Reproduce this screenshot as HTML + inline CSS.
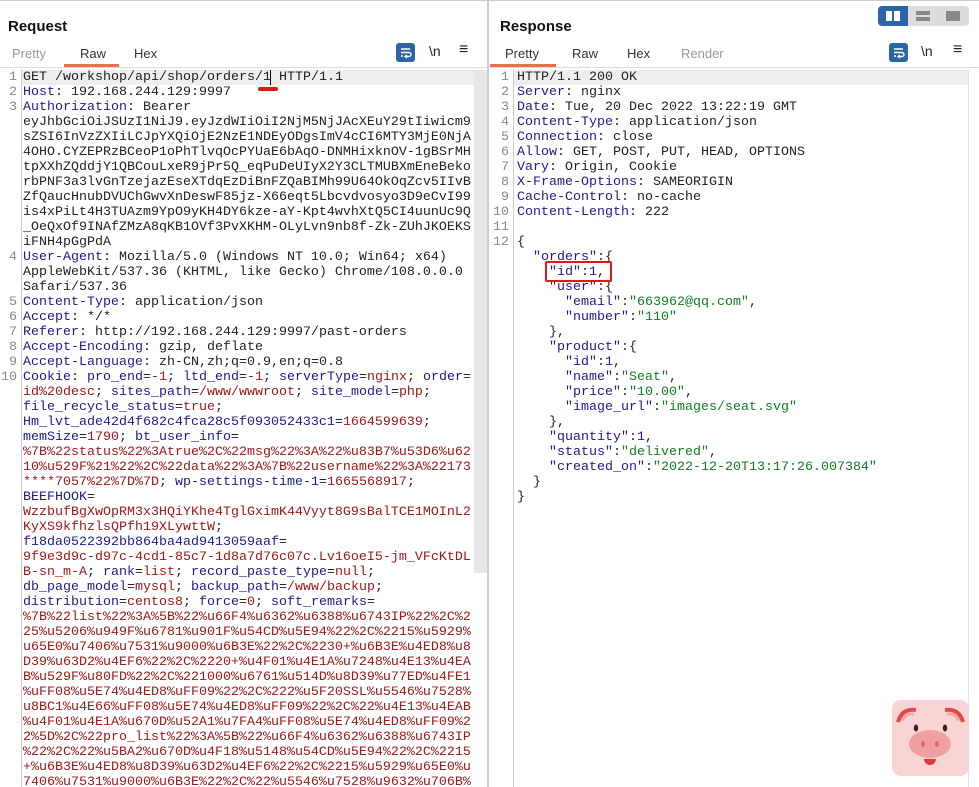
<!DOCTYPE html>
<html><head><meta charset="utf-8"><style>
*{margin:0;padding:0;box-sizing:border-box}
body{width:979px;height:787px;overflow:hidden;background:#fff;font-family:"Liberation Sans",sans-serif;position:relative}
.top{position:absolute;left:0;top:0;width:979px;height:1px;background:#ccc}
.h{position:absolute;font-weight:bold;font-size:15px;color:#111;top:18px}
.tab{position:absolute;top:46px;font-size:13px;color:#333}
.tab.g{color:#999}
.ul{position:absolute;height:3px;background:#e8704a;top:64px}
.bl{position:absolute;height:1px;background:#ddd;top:67px}
.ed{position:absolute;top:70px;bottom:0;overflow:hidden;font-family:"Liberation Mono",monospace;font-size:13.33px;line-height:15px;white-space:pre;color:#222}
.ln{position:absolute;top:70px;font-family:"Liberation Mono",monospace;font-size:13.33px;line-height:15px;color:#888;text-align:right;white-space:pre}
.k{color:#1c1c8f}.v{color:#a01818}.s{color:#0f7f1f}.n{color:#1c1c8f}
.ic{position:absolute;top:43px;font-size:14px;color:#222}
.wrap{position:absolute;top:43px;width:19px;height:19px;background:#2c64a8;border-radius:3px}
</style></head><body>
<div class="top"></div>
<!-- LEFT -->
<div class="h" style="left:8px">Request</div>
<div class="tab g" style="left:12px">Pretty</div>
<div class="tab" style="left:80px">Raw</div>
<div class="tab" style="left:134px">Hex</div>
<div class="ul" style="left:64px;width:55px"></div>
<div class="bl" style="left:0;width:487px"></div>
<div class="wrap" style="left:396px"><svg width="19" height="19"><path d="M5 6h9M5 9.5h8a2 2 0 0 1 0 4h-3M11 12l-2 1.5 2 1.5M5 13h2" stroke="#fff" stroke-width="1.4" fill="none"/></svg></div>
<div class="ic" style="left:429px">\n</div>
<div class="ic" style="left:459px;font-size:16px;top:41px">≡</div>
<div style="position:absolute;left:21px;top:70px;width:454px;height:15px;background:#eee"></div>
<div style="position:absolute;left:21px;top:70px;width:1px;bottom:0;background:#ccc"></div>
<div style="position:absolute;left:474px;top:70px;width:13px;height:503px;background:#e6e6e6"></div>
<div style="position:absolute;left:487px;top:0;width:2px;bottom:0;background:#ccc"></div>
<div class="ln" style="left:0;width:17px">1
2
3









4


5
6
7
8
9
10</div>
<div class="ed" style="left:23px;width:451px">GET /workshop/api/shop/orders/1<span style="border-left:1.5px solid #000;margin-left:-1px"></span> HTTP/1.1
<span class="k">Host</span>: 192.168.244.129:9997
<span class="k">Authorization</span>: Bearer
eyJhbGciOiJSUzI1NiJ9.eyJzdWIiOiI2NjM5NjJAcXEuY29tIiwicm9
sZSI6InVzZXIiLCJpYXQiOjE2NzE1NDEyODgsImV4cCI6MTY3MjE0NjA
4OHO.CYZEPRzBCeoP1oPhTlvqOcPYUaE6bAqO-DNMHixknOV-1gBSrMH
tpXXhZQddjY1QBCouLxeR9jPr5Q_eqPuDeUIyX2Y3CLTMUBXmEneBeko
rbPNF3a3lvGnTzejazEseXTdqEzDiBnFZQaBIMh99U64OkOqZcv5IIvB
ZfQaucHnubDVUChGwvXnDeswF85jz-X66eqt5Lbcvdvosyo3D9eCvI99
is4xPiLt4H3TUAzm9YpO9yKH4DY6kze-aY-Kpt4wvhXtQ5CI4uunUc9Q
_OeQxOf9INAfZMzA8qKB1OVf3PvXKHM-OLyLvn9nb8f-Zk-ZUhJKOEKS
iFNH4pGgPdA
<span class="k">User-Agent</span>: Mozilla/5.0 (Windows NT 10.0; Win64; x64)
AppleWebKit/537.36 (KHTML, like Gecko) Chrome/108.0.0.0
Safari/537.36
<span class="k">Content-Type</span>: application/json
<span class="k">Accept</span>: */*
<span class="k">Referer</span>: http://192.168.244.129:9997/past-orders
<span class="k">Accept-Encoding</span>: gzip, deflate
<span class="k">Accept-Language</span>: zh-CN,zh;q=0.9,en;q=0.8
<span class="k">Cookie</span>: <span class="k">pro_end</span>=<span class="v">-1</span>; <span class="k">ltd_end</span>=<span class="v">-1</span>; <span class="k">serverType</span>=<span class="v">nginx</span>; <span class="k">order</span>=
<span class="v">id%20desc</span>; <span class="k">sites_path</span>=<span class="v">/www/wwwroot</span>; <span class="k">site_model</span>=<span class="v">php</span>;
<span class="k">file_recycle_status</span>=<span class="v">true</span>;
<span class="k">Hm_lvt_ade42d4f682c4fca28c5f093052433c1</span>=<span class="v">1664599639</span>;
<span class="k">memSize</span>=<span class="v">1790</span>; <span class="k">bt_user_info</span>=
<span class="v">%7B%22status%22%3Atrue%2C%22msg%22%3A%22%u83B7%u53D6%u62
10%u529F%21%22%2C%22data%22%3A%7B%22username%22%3A%22173
****7057%22%7D%7D</span>; <span class="k">wp-settings-time-1</span>=<span class="v">1665568917</span>;
<span class="k">BEEFHOOK</span>=
<span class="v">WzzbufBgXwOpRM3x3HQiYKhe4TglGximK44Vyyt8G9sBalTCE1MOInL2
KyXS9kfhzlsQPfh19XLywttW</span>;
<span class="k">f18da0522392bb864ba4ad9413059aaf</span>=
<span class="v">9f9e3d9c-d97c-4cd1-85c7-1d8a7d76c07c.Lv16oeI5-jm_VFcKtDL
B-sn_m-A</span>; <span class="k">rank</span>=<span class="v">list</span>; <span class="k">record_paste_type</span>=<span class="v">null</span>;
<span class="k">db_page_model</span>=<span class="v">mysql</span>; <span class="k">backup_path</span>=<span class="v">/www/backup</span>;
<span class="k">distribution</span>=<span class="v">centos8</span>; <span class="k">force</span>=<span class="v">0</span>; <span class="k">soft_remarks</span>=
<span class="v">%7B%22list%22%3A%5B%22%u66F4%u6362%u6388%u6743IP%22%2C%2
25%u5206%u949F%u6781%u901F%u54CD%u5E94%22%2C%2215%u5929%
u65E0%u7406%u7531%u9000%u6B3E%22%2C%2230+%u6B3E%u4ED8%u8
D39%u63D2%u4EF6%22%2C%2220+%u4F01%u4E1A%u7248%u4E13%u4EA
B%u529F%u80FD%22%2C%221000%u6761%u514D%u8D39%u77ED%u4FE1
%uFF08%u5E74%u4ED8%uFF09%22%2C%222%u5F20SSL%u5546%u7528%
u8BC1%u4E66%uFF08%u5E74%u4ED8%uFF09%22%2C%22%u4E13%u4EAB
%u4F01%u4E1A%u670D%u52A1%u7FA4%uFF08%u5E74%u4ED8%uFF09%2
2%5D%2C%22pro_list%22%3A%5B%22%u66F4%u6362%u6388%u6743IP
%22%2C%22%u5BA2%u670D%u4F18%u5148%u54CD%u5E94%22%2C%2215
+%u6B3E%u4ED8%u8D39%u63D2%u4EF6%22%2C%2215%u5929%u65E0%u
7406%u7531%u9000%u6B3E%22%2C%22%u5546%u7528%u9632%u706B%</span></div>
<div style="position:absolute;left:258px;top:87px;width:20px;height:4px;border-radius:2px;background:#e01818"></div>

<!-- RIGHT -->
<div class="h" style="left:500px">Response</div>
<div style="position:absolute;left:878px;top:6px;width:91px;height:20px;background:#ddd;border-radius:4px"></div>
<div style="position:absolute;left:878px;top:6px;width:30px;height:20px;background:#2c64a8;border-radius:4px 0 0 4px"></div>
<div style="position:absolute;left:886px;top:11px;width:6px;height:10px;background:#fff"></div>
<div style="position:absolute;left:894px;top:11px;width:6px;height:10px;background:#fff"></div>
<div style="position:absolute;left:916px;top:11px;width:14px;height:4px;background:#888"></div>
<div style="position:absolute;left:916px;top:17px;width:14px;height:4px;background:#888"></div>
<div style="position:absolute;left:946px;top:11px;width:14px;height:10px;background:#888"></div>
<div class="tab" style="left:505px">Pretty</div>
<div class="tab" style="left:572px">Raw</div>
<div class="tab" style="left:627px">Hex</div>
<div class="tab g" style="left:681px">Render</div>
<div class="ul" style="left:490px;width:66px"></div>
<div class="bl" style="left:489px;width:490px"></div>
<div class="wrap" style="left:889px"><svg width="19" height="19"><path d="M5 6h9M5 9.5h8a2 2 0 0 1 0 4h-3M11 12l-2 1.5 2 1.5M5 13h2" stroke="#fff" stroke-width="1.4" fill="none"/></svg></div>
<div class="ic" style="left:921px">\n</div>
<div class="ic" style="left:953px;font-size:16px;top:41px">≡</div>
<div style="position:absolute;left:513px;top:70px;width:455px;height:15px;background:#eee"></div>
<div style="position:absolute;left:513px;top:70px;width:1px;bottom:0;background:#ccc"></div>
<div style="position:absolute;left:968px;top:70px;width:1px;bottom:0;background:#e4e4e4"></div>
<div class="ln" style="left:490px;width:19px"> 1
 2
 3
 4
 5
 6
 7
 8
 9
10
11
12</div>
<div class="ed" style="left:517px;width:450px">HTTP/1.1 200 OK
<span class="k">Server</span>: nginx
<span class="k">Date</span>: Tue, 20 Dec 2022 13:22:19 GMT
<span class="k">Content-Type</span>: application/json
<span class="k">Connection</span>: close
<span class="k">Allow</span>: GET, POST, PUT, HEAD, OPTIONS
<span class="k">Vary</span>: Origin, Cookie
<span class="k">X-Frame-Options</span>: SAMEORIGIN
<span class="k">Cache-Control</span>: no-cache
<span class="k">Content-Length</span>: 222

{
  <span class="k">"orders"</span>:{
    <span class="k">"id"</span>:<span class="n">1</span>,
    <span class="k">"user"</span>:{
      <span class="k">"email"</span>:<span class="s">"663962@qq.com"</span>,
      <span class="k">"number"</span>:<span class="s">"110"</span>
    },
    <span class="k">"product"</span>:{
      <span class="k">"id"</span>:<span class="n">1</span>,
      <span class="k">"name"</span>:<span class="s">"Seat"</span>,
      <span class="k">"price"</span>:<span class="s">"10.00"</span>,
      <span class="k">"image_url"</span>:<span class="s">"images/seat.svg"</span>
    },
    <span class="k">"quantity"</span>:<span class="n">1</span>,
    <span class="k">"status"</span>:<span class="s">"delivered"</span>,
    <span class="k">"created_on"</span>:<span class="s">"2022-12-20T13:17:26.007384"</span>
  }
}</div>
<div style="position:absolute;left:545px;top:261px;width:67px;height:21px;border:2.5px solid #e01818;border-radius:2px"></div>

<!-- pig -->
<svg style="position:absolute;left:892px;top:700px" width="77" height="76" viewBox="0 0 77 76">
<rect x="0" y="0" width="77" height="76" rx="9" fill="#f9d4d4"/>
<path d="M6 22 Q10 8 24 10" stroke="#e04a4a" stroke-width="4" fill="none"/>
<path d="M10 21 Q13 13 22 14" stroke="#f3a8a8" stroke-width="3" fill="none"/>
<path d="M71 22 Q67 8 53 10" stroke="#e04a4a" stroke-width="4" fill="none"/>
<path d="M67 21 Q64 13 55 14" stroke="#f3a8a8" stroke-width="3" fill="none"/>
<ellipse cx="24" cy="28" rx="2.2" ry="3.5" fill="#3a2020"/>
<ellipse cx="53" cy="28" rx="2.2" ry="3.5" fill="#3a2020"/>
<ellipse cx="38" cy="44" rx="21" ry="14" fill="#f0a0a0"/>
<ellipse cx="31" cy="44" rx="2" ry="3" fill="#e06868"/>
<ellipse cx="45" cy="44" rx="2" ry="3" fill="#e06868"/>
<path d="M32 59 h12 a6 6 0 0 1 -12 0z" fill="#e03838"/>
</svg>
</body></html>
